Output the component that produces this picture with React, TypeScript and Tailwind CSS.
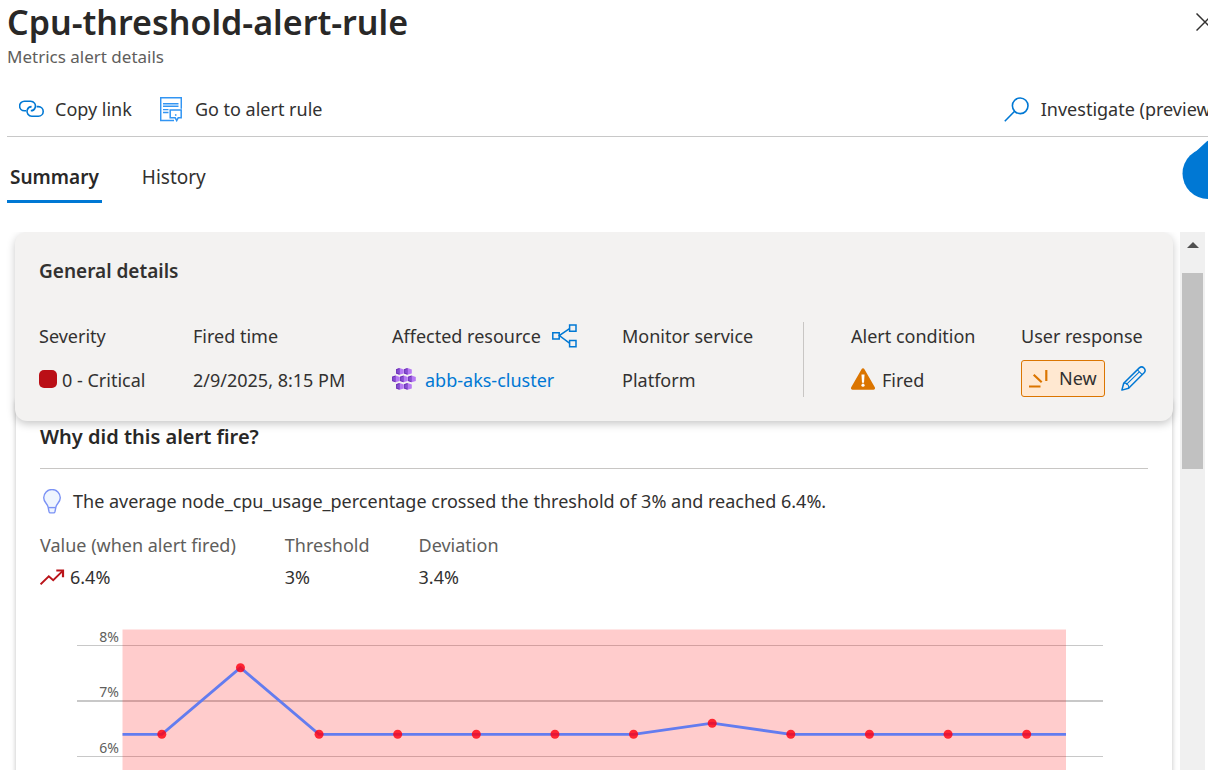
import React from "react";

const points = [6.4, 7.6, 6.4, 6.4, 6.4, 6.4, 6.4, 6.6, 6.4, 6.4, 6.4, 6.4];
const ticks = [8, 7, 6];

const PLOT_LEFT = 82.5;
const PLOT_RIGHT = 1026;
const STEP = (PLOT_RIGHT - PLOT_LEFT) / points.length;
const toX = (i: number) => PLOT_LEFT + STEP * (i + 0.5);
const toY = (v: number) => 16.5 + (8 - v) * 55.5;

function LinkIcon() {
  return (
    <svg viewBox="0 0 25 18" className="h-[18px] w-[25px]" fill="none" stroke="#0078d4" strokeWidth="1.6" aria-hidden="true">
      <path d="M7.200 10.800H5.400a4.800 4.800 0 0 1 0-9.600h6.200a4.800 4.800 0 0 1 4.600 6.200 4.800 4.800 0 0 1-4.400 3.400" />
      <path d="M17.600 6.600h1.800a4.800 4.800 0 0 1 0 9.600h-6.600a4.800 4.800 0 0 1-4.600-6.200 4.800 4.800 0 0 1 4.400-3.400" />
    </svg>
  );
}

function RuleIcon() {
  return (
    <svg viewBox="0 0 22 25" className="h-[25px] w-[22px]" fill="none" stroke="#3295f3" strokeWidth="1.5" aria-hidden="true">
      <path d="M14 23.600H.7V.8h20.600v11" />
      <path d="M3 6.700h15.500M3 9.200h15.500M3 12.600h5.500M3 15.500h5.500" strokeWidth="1.400" />
      <path d="M10.200 13h11v7.800h-3l-1.500 2.800-1.500-2.800h-5z" />
      <path d="M15.700 17.200v1.600" />
    </svg>
  );
}

function SearchIcon() {
  return (
    <svg viewBox="0 0 25 25" className="h-[25px] w-[25px]" fill="none" stroke="#0078d4" strokeWidth="1.6" aria-hidden="true">
      <circle cx="16.200" cy="8.800" r="7.800" />
      <path d="M10.600 14.300.8 24.200" />
    </svg>
  );
}

function ShareIcon() {
  return (
    <svg viewBox="0 0 25 24" className="h-6 w-[25px]" fill="none" stroke="#0078d4" strokeWidth="1.5" aria-hidden="true">
      <path d="M.8 8.700h6.400v6.400H.8zM17.600.9h6.400v6.400h-6.400zM17.600 16.400h6.400v6.400h-6.400z" />
      <path d="m17.500 4.600-10.200 7 10.200 7.600" />
    </svg>
  );
}

const nodes = [
  [4, 0],
  [12, 0],
  [0, 7.5],
  [8, 7.5],
  [16, 7.5],
  [4, 15],
  [12, 15],
];

function ClusterIcon() {
  return (
    <svg viewBox="0 0 24 22" className="h-[22px] w-6 shrink-0" aria-hidden="true">
      {nodes.map(([x, y]) => (
        <g key={`${x}-${y}`} transform={`translate(${x} ${y})`}>
          <path d="m0 1.200 3.500-1.200L7.800 1.400v4L3.500 6.800 0 5.500z" fill="#b77af4" />
          <path d="m0 1.200 3.500-1.200v6.800L0 5.500z" fill="#6b2fb3" />
          <path d="M1.200 1.700v3.400M2.400 1.400v4" stroke="#a67af4" strokeWidth=".5" />
        </g>
      ))}
    </svg>
  );
}

function WarningIcon() {
  return (
    <svg viewBox="0 0 24 22" className="h-[22px] w-6 shrink-0" aria-hidden="true">
      <path d="M10.700.9a1.500 1.500 0 0 1 2.600 0l10.500 18.400A1.600 1.600 0 0 1 22.400 21.700H1.600A1.600 1.600 0 0 1 .2 19.300z" fill="#db7500" />
      <path d="M10.500 6.500h3l-.5 8.200h-2z" fill="#fff" />
      <circle cx="12" cy="17.200" r="1.600" fill="#fff" />
    </svg>
  );
}

function NewIcon() {
  return (
    <svg viewBox="0 0 19 19" className="h-[19px] w-[19px]" fill="none" stroke="#db7500" strokeWidth="2.200" aria-hidden="true">
      <path d="M0 17.500h11.500M4.700 5.700l8 7.600M17.300 1v11" />
    </svg>
  );
}

function PencilIcon() {
  return (
    <svg viewBox="0 0 25 25" className="h-[25px] w-[25px]" fill="none" stroke="#0078d4" strokeWidth="1.500" strokeLinejoin="round" aria-hidden="true">
      <path d="M.9 24.100 2.700 17.300 18.300 1.900a3.400 3.400 0 0 1 4.800 4.800L7.600 22.300z" />
      <path d="m16.400 3.800 4.800 4.800M2.700 17.300a4 4 0 0 1 4.900 5M5.200 18.600 18.600 5.600" strokeWidth="1.100" />
    </svg>
  );
}

function BulbIcon() {
  return (
    <svg viewBox="0 0 18 25" className="h-[25px] w-[18px]" fill="#eff5fe" stroke="#7b92f5" strokeWidth="1.400" strokeLinejoin="round" aria-hidden="true">
      <path d="M5.100 18.200C4.700 14.600.7 13.300.7 8.800a8.300 8.300 0 0 1 16.600 0c0 4.500-4 5.800-4.400 9.400l-1 4.700a1.300 1.300 0 0 1-1.300 1H7.400a1.300 1.300 0 0 1-1.300-1z" />
      <path d="M5.100 18.600h7.800" />
    </svg>
  );
}

function TrendIcon() {
  return (
    <svg viewBox="0 0 25 17" className="h-[17px] w-[25px]" fill="none" stroke="#ba141a" strokeWidth="1.900" aria-hidden="true">
      <path d="m.6 15.300 8.200-8 4.400 4L23 1.600" />
      <path d="M16.300 1.500H23v6.800" strokeWidth="2.200" />
    </svg>
  );
}

function Detail({ label, children, className = "", extra }: { label: string; children: React.ReactNode; className?: string; extra?: React.ReactNode }) {
  return (
    <div className={className}>
      <dt className="flex h-7 items-center gap-[11px] whitespace-nowrap">
        {label}
        {extra}
      </dt>
      <dd className="mt-2.5 flex h-[37px] items-center whitespace-nowrap">{children}</dd>
    </div>
  );
}

function Value({ children }: { children: React.ReactNode }) {
  return <span className="inline-block pt-[3px]">{children}</span>;
}

function Metric({ label, children }: { label: string; children: React.ReactNode }) {
  return (
    <div>
      <dt className="leading-7 text-[#605e5c]">{label}</dt>
      <dd className="mt-1 flex h-7 items-center gap-[5px]">{children}</dd>
    </div>
  );
}

function Chart() {
  const line = points.map((v, i) => `${toX(i)},${toY(v)}`).join(" ");
  return (
    <svg viewBox="0 0 1108 160" className="mt-[38px] block w-full" role="img" aria-label="node_cpu_usage_percentage">
      {ticks.map((t) => (
        <g key={t}>
          <line x1="37" x2="1063" y1={toY(t)} y2={toY(t)} stroke="#c8c8c8" strokeWidth={t === 7 ? 2 : 1} />
          <text x="79" y={toY(t) - 4} textAnchor="end" className="fill-[#605e5c] text-[14px]">
            {t}%
          </text>
        </g>
      ))}
      <rect x={PLOT_LEFT} y="0.500" width={PLOT_RIGHT - PLOT_LEFT} height="160" fill="#ff0000" fillOpacity="0.2" />
      <polyline
        points={`${PLOT_LEFT},${toY(6.4)} ${line} ${PLOT_RIGHT},${toY(6.4)}`}
        fill="none"
        stroke="#637cef"
        strokeWidth="2.800"
      />
      {points.map((v, i) => (
        <circle key={i} cx={toX(i)} cy={toY(v)} r="4.500" fill="#ff0010" fillOpacity="0.82" />
      ))}
    </svg>
  );
}

export default function App() {
  return (
    <div className="relative flex h-screen flex-col overflow-hidden bg-white font-['Noto_Sans','Open_Sans',sans-serif] text-[18px] text-[#323130]">
      <header className="shrink-0 pl-[7px]">
        <div className="flex h-11 items-center justify-between">
          <h1 className="whitespace-nowrap text-[34px] font-semibold text-[#292827]">Cpu-threshold-alert-rule</h1>
          <button type="button" aria-label="Close" className="-mr-1.5 shrink-0">
            <svg viewBox="0 0 18 18" className="h-[18px] w-[18px]" stroke="#323130" strokeWidth="1.500" aria-hidden="true">
              <path d="m.5.500 17 17M17.500.500l-17 17" />
            </svg>
          </button>
        </div>
        <p className="text-[17px] leading-[26px] text-[#605e5c]">Metrics alert details</p>
        <div className="mt-3 flex h-[55px] items-center justify-between border-b border-[#c8c8c8] pl-3">
          <div className="flex gap-7">
            <button type="button" className="flex items-center gap-[11px] whitespace-nowrap">
              <LinkIcon />
              Copy link
            </button>
            <button type="button" className="flex items-center gap-[13px] whitespace-nowrap">
              <RuleIcon />
              Go to alert rule
            </button>
          </div>
          <button type="button" className="-mr-2 flex items-center gap-3 whitespace-nowrap">
            <SearchIcon />
            Investigate (preview)
          </button>
        </div>
      </header>

      <svg viewBox="0 0 52 60" className="absolute -right-[26px] top-[140px] h-[60px] w-[52px]" fill="#0078d4" aria-hidden="true">
        <circle cx="26" cy="33.500" r="25.500" />
        <path d="M11 13.500Q14 12 16 9.500L25.500.800 36 9.500 41 13.500 26 30z" />
      </svg>

      <nav className="flex shrink-0 gap-[38px] pl-[7px] pt-[18px]" role="tablist">
        <button type="button" role="tab" aria-selected="true" className="h-12 border-b-[3px] border-[#0078d4] px-[3px] text-[19px] font-semibold text-[#292827]">
          Summary
        </button>
        <button type="button" role="tab" aria-selected="false" className="h-12 border-b-[3px] border-transparent px-0.5 text-[19px]">
          History
        </button>
      </nav>

      <div className="mt-[29px] flex min-h-0 flex-1 pr-[3px]">
        <main className="min-w-0 flex-1 overflow-hidden pl-[15px] pr-[7px]">
          <section className="relative z-10 rounded-xl bg-[#f3f2f1] p-6 shadow-[0_3px_8px_rgba(0,0,0,0.22)]">
            <h2 className="text-[19px] leading-[30px] font-semibold">General details</h2>
            <dl className="mt-9 grid grid-cols-[154fr_199fr_230fr_181fr_218fr_128fr]">
              <Detail label="Severity">
                <span className="mr-[5px] h-[18px] w-[18px] rounded-[5px] bg-[#ba0f16]" />
                <Value>0 - Critical</Value>
              </Detail>
              <Detail label="Fired time">
                <Value>2/9/2025, 8:15 PM</Value>
              </Detail>
              <Detail label="Affected resource" extra={<ShareIcon />}>
                <ClusterIcon />
                <a href="#resource" className="ml-[9px] text-[#0078d4]">
                  <Value>abb-aks-cluster</Value>
                </a>
              </Detail>
              <Detail label="Monitor service">
                <Value>Platform</Value>
              </Detail>
              <Detail label="Alert condition" className="border-l border-[#c8c6c4] pl-[47px]">
                <span className="mr-[7px]">
                  <WarningIcon />
                </span>
                <Value>Fired</Value>
              </Detail>
              <Detail label="User response">
                <span className="flex h-[37px] items-center gap-[11px] rounded-[3px] border border-[#db7500] bg-[#ffe8d1] px-[7px]">
                  <NewIcon />
                  New
                </span>
                <button type="button" aria-label="Edit user response" className="ml-4">
                  <PencilIcon />
                </button>
              </Detail>
            </dl>
          </section>

          <section className="mx-px -mt-5 bg-white px-6 pt-[22px] shadow-[0_0_5px_rgba(0,0,0,0.25)]">
            <h2 className="border-b border-[#c8c6c4] pb-[17px] text-[20px] leading-7 font-semibold text-[#292827]">Why did this alert fire?</h2>
            <p className="mt-[18px] flex items-center gap-3 pl-[3px] leading-7">
              <BulbIcon />
              The average node_cpu_usage_percentage crossed the threshold of 3% and reached 6.4%.
            </p>
            <dl className="mt-4 flex gap-[49px]">
              <Metric label="Value (when alert fired)">
                <TrendIcon />
                6.4%
              </Metric>
              <Metric label="Threshold">3%</Metric>
              <Metric label="Deviation">3.4%</Metric>
            </dl>
            <Chart />
          </section>
        </main>

        <div className="flex w-[25px] shrink-0 flex-col items-center bg-[#f0f0f0]" aria-hidden="true">
          <div className="flex h-[41px] items-start pt-[10px]">
            <svg viewBox="0 0 12 6" className="h-1.5 w-3">
              <path d="M0 6 6 0l6 6z" fill="#505050" />
            </svg>
          </div>
          <div className="h-[196px] w-[21px] bg-[#c1c1c1]" />
        </div>
      </div>
    </div>
  );
}
